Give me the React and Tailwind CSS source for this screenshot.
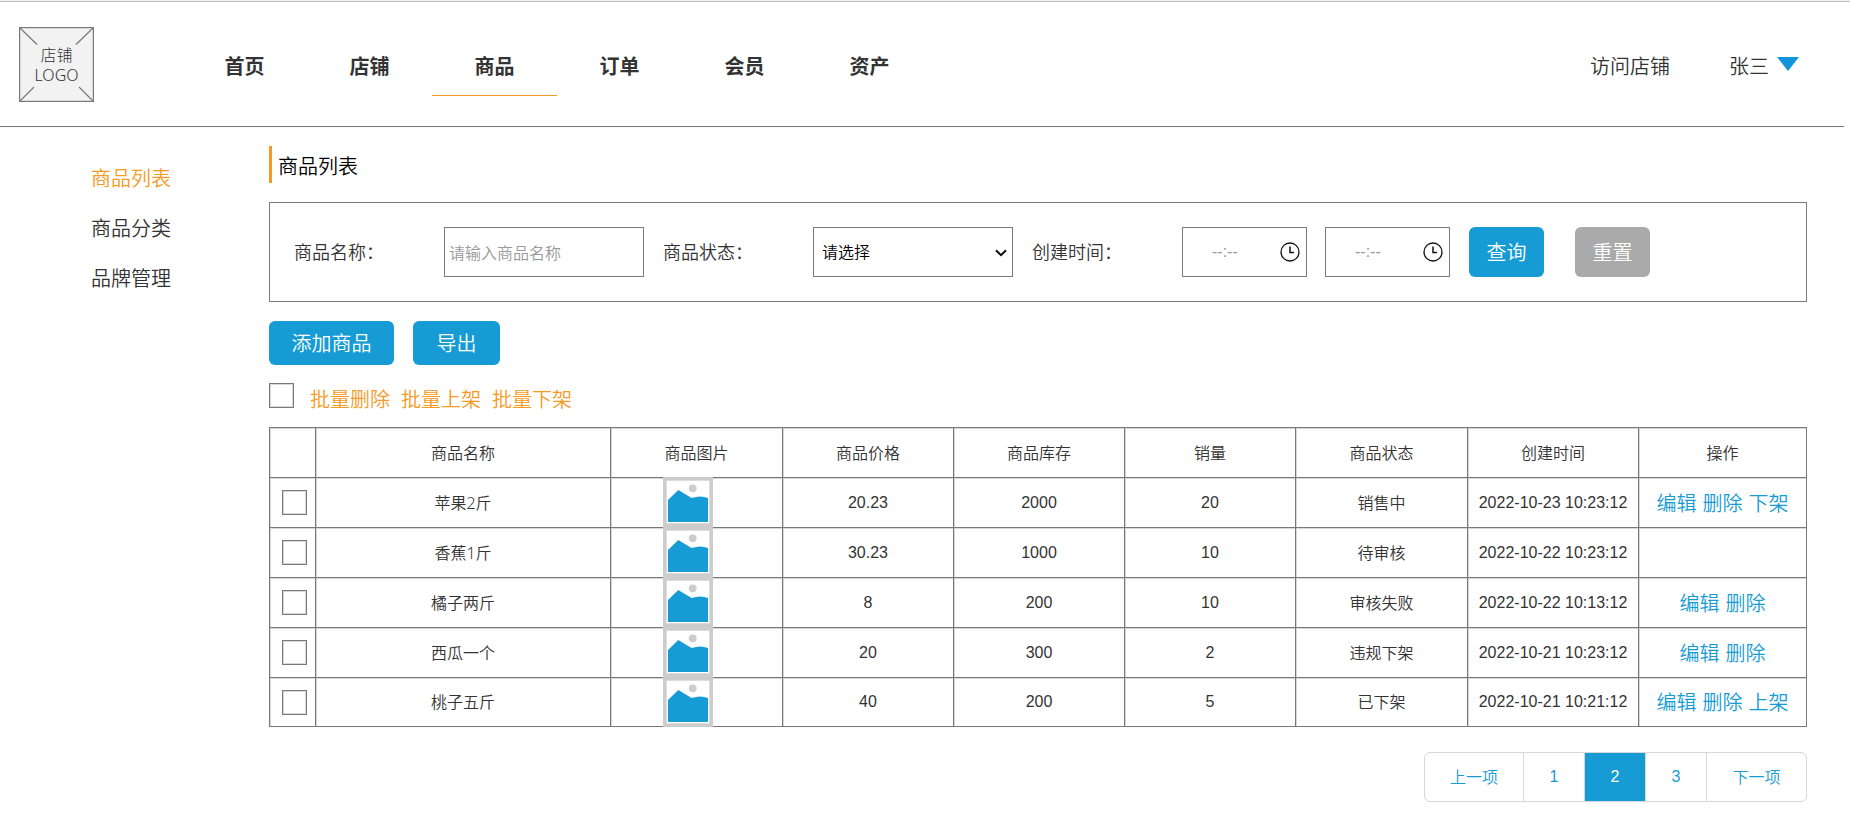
import React, { useState } from "react";

const navItems = ["首页", "店铺", "商品", "订单", "会员", "资产"];
const sideItems = ["商品列表", "商品分类", "品牌管理"];
const batchActions = ["批量删除", "批量上架", "批量下架"];
const headers = ["商品名称", "商品图片", "商品价格", "商品库存", "销量", "商品状态", "创建时间", "操作"];

const products = [
  { id: 1, name: "苹果2斤", price: "20.23", stock: 2000, sales: 20, status: "销售中", createdAt: "2022-10-23 10:23:12", actions: ["编辑", "删除", "下架"] },
  { id: 2, name: "香蕉1斤", price: "30.23", stock: 1000, sales: 10, status: "待审核", createdAt: "2022-10-22 10:23:12", actions: [] },
  { id: 3, name: "橘子两斤", price: "8", stock: 200, sales: 10, status: "审核失败", createdAt: "2022-10-22 10:13:12", actions: ["编辑", "删除"] },
  { id: 4, name: "西瓜一个", price: "20", stock: 300, sales: 2, status: "违规下架", createdAt: "2022-10-21 10:23:12", actions: ["编辑", "删除"] },
  { id: 5, name: "桃子五斤", price: "40", stock: 200, sales: 5, status: "已下架", createdAt: "2022-10-21 10:21:12", actions: ["编辑", "删除", "上架"] },
];

const cell = "border border-[#797979] font-[350] shadow-[inset_1px_1px_0_#d7d7d7]";

function Logo() {
  return (
    <a href="#" className="relative flex size-[75px] shrink-0 items-center justify-center">
      <svg viewBox="0 0 75 75" className="absolute inset-0 size-full" aria-hidden="true">
        <rect x="0.5" y="0.5" width="74" height="74" fill="#f2f2f2" stroke="#797979" />
        <rect x="1.5" y="1.5" width="72" height="72" fill="none" stroke="#d7d7d7" />
        <path d="M1 1L18 17.5M74 1L57 17.5M1 74L15 60M74 74L60 60" stroke="#797979" strokeWidth="1.2" fill="none" />
      </svg>
      <span className="relative pt-0.5 text-center font-['Noto_Sans','Noto_Sans_CJK_SC',sans-serif] text-base leading-5 font-light">
        <span className="block">店铺</span>
        <span className="block">LOGO</span>
      </span>
    </a>
  );
}

function ProductImage() {
  return (
    <svg viewBox="0 0 50 50" className="-my-px ml-[52px] block size-[50px]" role="img" aria-label="商品图片">
      <rect width="50" height="50" fill="#ccc" />
      <rect x="3" y="3" width="44" height="44" fill="#ddd" />
      <rect x="4" y="4" width="42" height="42" fill="#fff" />
      <circle cx="29.7" cy="11.3" r="3.9" fill="#ccc" />
      <path d="M5 23L15.3 13L28.6 21L32 20.2Q37 18.8 41 20L45 21V45H5Z" fill="#169bd5" />
    </svg>
  );
}

function Checkbox({ label, checked, onChange, className = "" }) {
  return (
    <input
      type="checkbox"
      aria-label={label}
      checked={checked}
      onChange={onChange}
      className={`block size-[25px] shrink-0 appearance-none border border-[#797979] bg-white shadow-[inset_0_0_0_1px_#d7d7d7] checked:bg-[#169bd5] ${className}`}
    />
  );
}

function TimeField({ label, value, onChange }) {
  return (
    <div className="relative w-[125px]">
      <input
        type="text"
        aria-label={label}
        placeholder="--:--"
        value={value}
        onChange={(e) => onChange(e.target.value)}
        className="h-[50px] w-full border border-[#797979] pr-9 pl-[29px] text-base font-[350] placeholder:text-[#999]"
      />
      <svg viewBox="0 0 20 20" className="pointer-events-none absolute top-[15px] right-[7px] size-5" fill="none" stroke="#111" aria-hidden="true">
        <circle cx="10" cy="10" r="9" strokeWidth="1.3" />
        <path d="M10 4.5V10.5H14" strokeWidth="1.5" />
      </svg>
    </div>
  );
}

export default function App() {
  const [name, setName] = useState("");
  const [status, setStatus] = useState("");
  const [startTime, setStartTime] = useState("");
  const [endTime, setEndTime] = useState("");
  const [selected, setSelected] = useState([]);
  const [page, setPage] = useState(2);

  const allSelected = selected.length === products.length;

  const toggleAll = () => setSelected(allSelected ? [] : products.map((p) => p.id));

  const toggleOne = (id) => {
    setSelected(selected.includes(id) ? selected.filter((s) => s !== id) : [...selected, id]);
  };

  const handleReset = () => {
    setName("");
    setStatus("");
    setStartTime("");
    setEndTime("");
  };

  return (
    <div className="min-h-screen border-t border-[#f2f2f2] bg-white font-['Liberation_Sans','Noto_Sans_CJK_SC',sans-serif] font-[350] text-[#333]">
      <header className="mr-[6px] border-b border-[#797979]">
        <div className="-mr-[6px] flex h-[125px] items-center border-t border-[#c0c0c0] pr-[51px] pl-[19px]">
          <Logo />
          <nav className="ml-[88px] flex">
            {navItems.map((item) => (
              <a
                key={item}
                href="#"
                className={`flex h-16 w-[125px] items-center justify-center border-b pt-1.5 text-xl font-bold ${
                  item === "商品" ? "border-[#f59a23]" : "border-transparent"
                }`}
              >
                {item}
              </a>
            ))}
          </nav>
          <div className="ml-auto flex items-center gap-[59px] pt-1.5 text-xl">
            <a href="#">访问店铺</a>
            <button type="button" className="flex items-center gap-2">
              张三
              <svg viewBox="0 0 22 14" className="-mt-1.5 h-3.5 w-[22px]" aria-hidden="true">
                <path d="M0 0H22L11 14Z" fill="#1296db" />
              </svg>
            </button>
          </div>
        </div>
      </header>

      <div className="flex">
        <aside className="w-[269px] shrink-0 pt-[27px] pl-[91px]">
          {sideItems.map((item, i) => (
            <a key={item} href="#" className={`block text-xl leading-[50px] ${i === 0 ? "text-[#f59a23]" : ""}`}>
              {item}
            </a>
          ))}
        </aside>

        <main className="min-w-0 flex-1 pt-[19px] pr-[43px]">
          <h1 className="border-l-3 border-[#f59a23] pt-[5px] pl-1.5 text-xl leading-8 font-[350] text-black">商品列表</h1>

          <form onSubmit={(e) => e.preventDefault()} className="mt-[19px] flex items-center border border-[#797979] px-6 py-6 text-lg">
            <label htmlFor="name" className="w-[150px] pt-0.5">商品名称：</label>
            <input
              id="name"
              type="text"
              placeholder="请输入商品名称"
              value={name}
              onChange={(e) => setName(e.target.value)}
              className="h-[50px] w-[200px] border border-[#797979] px-1 pt-1 text-base placeholder:text-[#999]"
            />
            <label htmlFor="status" className="ml-[19px] w-[150px] pt-0.5">商品状态：</label>
            <div className="relative w-[200px]">
              <select
                id="status"
                value={status}
                onChange={(e) => setStatus(e.target.value)}
                className="block h-[50px] w-full appearance-none border border-[#797979] bg-white px-2 pt-0.5 text-base text-black"
              >
                <option value="">请选择</option>
                <option value="销售中">销售中</option>
                <option value="待审核">待审核</option>
                <option value="已下架">已下架</option>
              </select>
              <svg viewBox="0 0 12 8" className="pointer-events-none absolute top-[22px] right-1.5 h-2 w-3" fill="none" stroke="#111" strokeWidth="2" aria-hidden="true">
                <path d="M1 1.2L6 6.2L11 1.2" />
              </svg>
            </div>
            <span className="ml-[19px] w-[150px] pt-0.5">创建时间：</span>
            <div className="flex gap-[18px]">
              <TimeField label="开始时间" value={startTime} onChange={setStartTime} />
              <TimeField label="结束时间" value={endTime} onChange={setEndTime} />
            </div>
            <button type="submit" className="ml-[19px] h-[50px] w-[75px] rounded-md bg-[#169bd5] pt-0.5 text-xl text-white">
              查询
            </button>
            <button type="button" onClick={handleReset} className="ml-[31px] h-[50px] w-[75px] rounded-md bg-[#aaa] pt-0.5 text-xl text-white">
              重置
            </button>
          </form>

          <div className="mt-[19px] flex gap-[19px] text-xl text-white">
            <button type="button" className="h-11 w-[125px] rounded-md bg-[#169bd5] pt-0.5">添加商品</button>
            <button type="button" className="h-11 w-[87px] rounded-md bg-[#169bd5] pt-0.5">导出</button>
          </div>

          <div className="mt-[18px] flex h-[25px] items-start">
            <Checkbox label="全选" checked={allSelected} onChange={toggleAll} />
            <div className="ml-4 flex gap-[11px] pt-[3px] text-xl leading-7 text-[#f59a23]">
              {batchActions.map((action) => (
                <button key={action} type="button">{action}</button>
              ))}
            </div>
          </div>

          <table className="mt-[19px] w-full table-fixed border-collapse text-center text-base">
            <colgroup>
              <col className="w-[46px]" />
              <col className="w-[295px]" />
              <col className="w-[172px]" />
              <col className="w-[171px]" />
              <col className="w-[171px]" />
              <col className="w-[171px]" />
              <col className="w-[172px]" />
              <col className="w-[171px]" />
              <col className="w-[168px]" />
            </colgroup>
            <thead>
              <tr className="h-[50px]">
                <td className={`${cell} p-0`}></td>
                {headers.map((h) => (
                  <th key={h} className={`${cell} p-0 pt-0.5`}>{h}</th>
                ))}
              </tr>
            </thead>
            <tbody>
              {products.map((p) => (
                <tr key={p.id} className="h-[50px] last:h-[49px]">
                  <td className={`${cell} p-0`}>
                    <Checkbox label={p.name} checked={selected.includes(p.id)} onChange={() => toggleOne(p.id)} className="ml-3" />
                  </td>
                  <td className={`${cell} p-0 font-['Noto_Sans','Noto_Sans_CJK_SC',sans-serif]`}>{p.name}</td>
                  <td className={`${cell} p-0 align-top`}>
                    <ProductImage />
                  </td>
                  <td className={`${cell} p-0`}>{p.price}</td>
                  <td className={`${cell} p-0`}>{p.stock}</td>
                  <td className={`${cell} p-0`}>{p.sales}</td>
                  <td className={`${cell} p-0 pt-0.5`}>{p.status}</td>
                  <td className={`${cell} p-0`}>{p.createdAt}</td>
                  <td className={`${cell} p-0 pt-0.5`}>
                    <div className="flex justify-center gap-1.5 text-xl text-[#169bd5]">
                      {p.actions.map((action) => (
                        <a key={action} href="#">{action}</a>
                      ))}
                    </div>
                  </td>
                </tr>
              ))}
            </tbody>
          </table>

          <nav className="mt-[25px] ml-auto flex h-[50px] w-fit divide-x divide-[#d7d7d7] overflow-hidden rounded-md border border-[#d7d7d7] text-base text-[#169bd5]">
            <button type="button" onClick={() => setPage(Math.max(1, page - 1))} className="w-[99px] pt-0.5">上一项</button>
            {[1, 2, 3].map((n) => (
              <button key={n} type="button" onClick={() => setPage(n)} className={`w-[61px] ${n === page ? "bg-[#169bd5] text-white" : ""}`}>
                {n}
              </button>
            ))}
            <button type="button" onClick={() => setPage(Math.min(3, page + 1))} className="w-[99px] pt-0.5">下一项</button>
          </nav>
        </main>
      </div>
    </div>
  );
}
